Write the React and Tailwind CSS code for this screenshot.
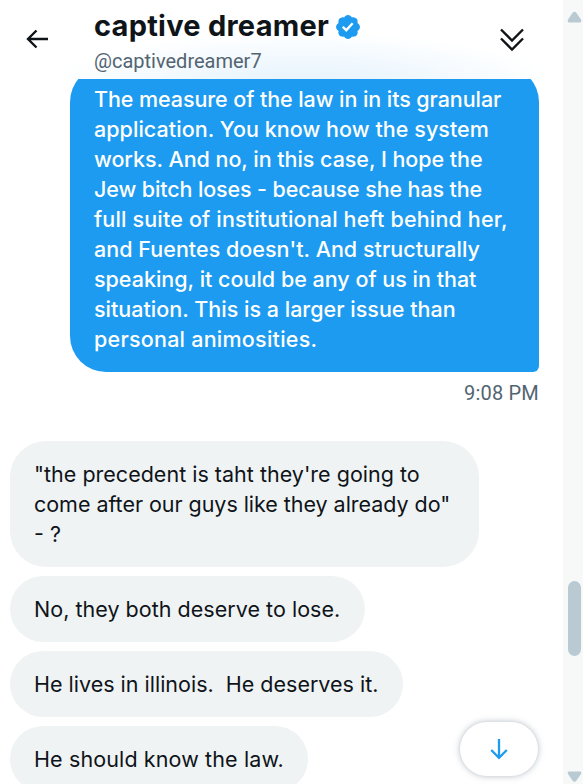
const sentLines = [
  { text: 'The measure of the law in in its granular', track: 'tracking-[-0.08px]' },
  { text: 'application. You know how the system', track: 'tracking-[0.05px]' },
  { text: 'works. And no, in this case, I hope the', track: 'tracking-[-0.04px]' },
  { text: 'Jew bitch loses - because she has the', track: 'tracking-[-0.12px]' },
  { text: 'full suite of institutional heft behind her,', track: 'tracking-[0.17px]' },
  { text: "and Fuentes doesn't. And structurally", track: 'tracking-[0.03px]' },
  { text: 'speaking, it could be any of us in that', track: 'tracking-[0px]' },
  { text: 'situation. This is a larger issue than', track: 'tracking-[0.01px]' },
  { text: 'personal animosities.', track: 'tracking-[0.24px]' },
];

const received = [
  {
    width: 'w-[469px]',
    lines: [
      { text: '"the precedent is taht they\'re going to', track: 'tracking-[0.01px]' },
      { text: 'come after our guys like they already do"', track: 'tracking-[-0.04px]' },
      { text: '- ?', track: 'tracking-[0px]' },
    ],
  },
  { width: 'w-[355px]', lines: [{ text: 'No, they both deserve to lose.', track: 'tracking-[0.03px]' }] },
  { width: 'w-[393px]', lines: [{ text: 'He lives in illinois.  He deserves it.', track: 'tracking-[0px]' }] },
  { width: 'w-[298px]', lines: [{ text: 'He should know the law.', track: 'tracking-[0.12px]' }] },
];

function Lines({ lines }) {
  return lines.map((line) => (
    <div key={line.text} className="whitespace-pre">
      <span className={line.track}>{line.text}</span>
    </div>
  ));
}

function VerifiedBadge() {
  return (
    <svg viewBox="0 0 22 22" className="mt-px ml-[5px] h-[28px] w-[28px]" fill="#1d9bf0">
      <path d="M20.396 11c-.018-.646-.215-1.275-.57-1.816-.354-.54-.852-.972-1.438-1.246.223-.607.27-1.264.14-1.897-.131-.634-.437-1.218-.882-1.687-.47-.445-1.053-.75-1.687-.882-.633-.13-1.29-.083-1.897.14-.273-.587-.704-1.086-1.245-1.44S11.647 1.62 11 1.604c-.646.017-1.273.213-1.813.568s-.969.854-1.24 1.44c-.608-.223-1.267-.272-1.902-.14-.635.13-1.22.436-1.69.882-.445.47-.749 1.055-.878 1.688-.13.633-.08 1.29.144 1.896-.587.274-1.087.705-1.443 1.245-.356.54-.555 1.17-.574 1.817.02.647.218 1.276.574 1.817.356.54.856.972 1.443 1.245-.224.606-.274 1.263-.144 1.896.13.634.433 1.218.877 1.688.47.443 1.054.747 1.687.878.633.132 1.29.084 1.897-.136.274.586.705 1.084 1.246 1.439.54.354 1.17.551 1.816.569.647-.016 1.276-.213 1.817-.567s.972-.854 1.245-1.44c.604.239 1.266.296 1.903.164.636-.132 1.22-.447 1.68-.907.46-.46.776-1.044.908-1.681s.075-1.299-.165-1.903c.586-.274 1.084-.705 1.439-1.246.354-.54.551-1.17.569-1.816zM9.662 14.85l-3.429-3.428 1.293-1.302 2.072 2.072 4.4-4.794 1.347 1.246z" />
    </svg>
  );
}

function Header() {
  return (
    <header className="flex h-[79px] shrink-0 bg-white bg-[radial-gradient(ellipse_260px_58px_at_305px_90px,#e3f1fc_0%,#f0f8fe_50%,#ffffff_100%)]">
      <div className="w-[94px] shrink-0 pt-[29px] pl-[26px]">
        <svg width="24" height="20" viewBox="0 0 24 20" fill="none" stroke="#0f1419" strokeWidth="2.4">
          <path d="M22 10H2.5M10.5 1.5L2 10l8.5 8.5" />
        </svg>
      </div>
      <div className="flex-1">
        <div className="flex h-[52px] items-center">
          <h1 className="text-[29px] leading-[52px] font-bold tracking-[0.25px] whitespace-nowrap text-[#0f1419]">captive dreamer</h1>
          <VerifiedBadge />
        </div>
        <p className="-mt-[4px] font-[Roboto,sans-serif] text-[20px] leading-[26px] text-[#536471]">@captivedreamer7</p>
      </div>
      <div className="w-[64px] pt-[28px]">
        <svg width="26" height="24" viewBox="0 0 26 24" fill="none" stroke="#0f1419" strokeWidth="2.4">
          <path d="M2 1.5l11 11 11-11M2 10.500l11 11 11-11" />
        </svg>
      </div>
    </header>
  );
}

function Scrollbar() {
  return (
    <div className="flex w-5 shrink-0 flex-col items-center bg-[#f7f9f9] pl-[3px]">
      <svg width="15" height="12" viewBox="0 0 15 12" className="mt-[11px]" fill="#b9cad3">
        <path d="M5.500 2Q7.500 -.5 9.500 2L14 8.500Q15 11.500 12.500 11.500H2.500Q0 11.500 1 8.500Z" />
      </svg>
      <div className="mt-[558px] h-[75px] w-[13px] rounded-full bg-[#b9cad3]" />
      <svg width="15" height="12" viewBox="0 0 15 12" className="mt-[115px]" fill="#b9cad3">
        <path d="M2 .5H13Q15 .5 14 3L9.500 9.500Q7.500 12 5.500 9.500L1 3Q0 .5 2 .5Z" />
      </svg>
    </div>
  );
}

export default function App() {
  return (
    <div className="flex h-[784px] w-[583px] overflow-hidden bg-white font-[Inter,sans-serif]">
      <main className="relative flex flex-1 flex-col">
        <Header />

        <section className="flex-1 overflow-hidden pr-6 pl-[10px]">
          {/* sent message, its top runs under the header */}
          <div className="-mt-[13px] ml-auto h-[306px] w-[469px] rounded-[36px] rounded-br-[6px] bg-[#1d9bf0] px-6 py-[18px] text-[21.5px] leading-[30px] font-[450] text-white">
            <Lines lines={sentLines} />
          </div>
          <p className="mt-2 text-right font-[Roboto,sans-serif] text-[20px] leading-[26px] tracking-[0.2px] text-[#536471]">9:08 PM</p>

          <div className="mt-[35px] flex flex-col items-start gap-[9px]">
            {received.map((msg) => (
              <div
                key={msg.width}
                className={`${msg.width} rounded-[36px] bg-[#eff3f4] px-6 py-[18px] text-[21.5px] leading-[30px] text-[#0f1419]`}
              >
                <Lines lines={msg.lines} />
              </div>
            ))}
          </div>
        </section>

        {/* jump to latest */}
        <button className="absolute right-[25px] bottom-2 flex h-[54px] w-[78px] items-center justify-center rounded-full bg-white shadow-[0_0_6px_rgba(101,119,134,0.5)]">
          <svg width="18" height="22" viewBox="0 0 18 22" fill="none" stroke="#1d9bf0" strokeWidth="2.3">
            <path d="M9 1v19M1.200 12L9 19.800l7.800-7.800" />
          </svg>
        </button>
      </main>
      <Scrollbar />
    </div>
  );
}
